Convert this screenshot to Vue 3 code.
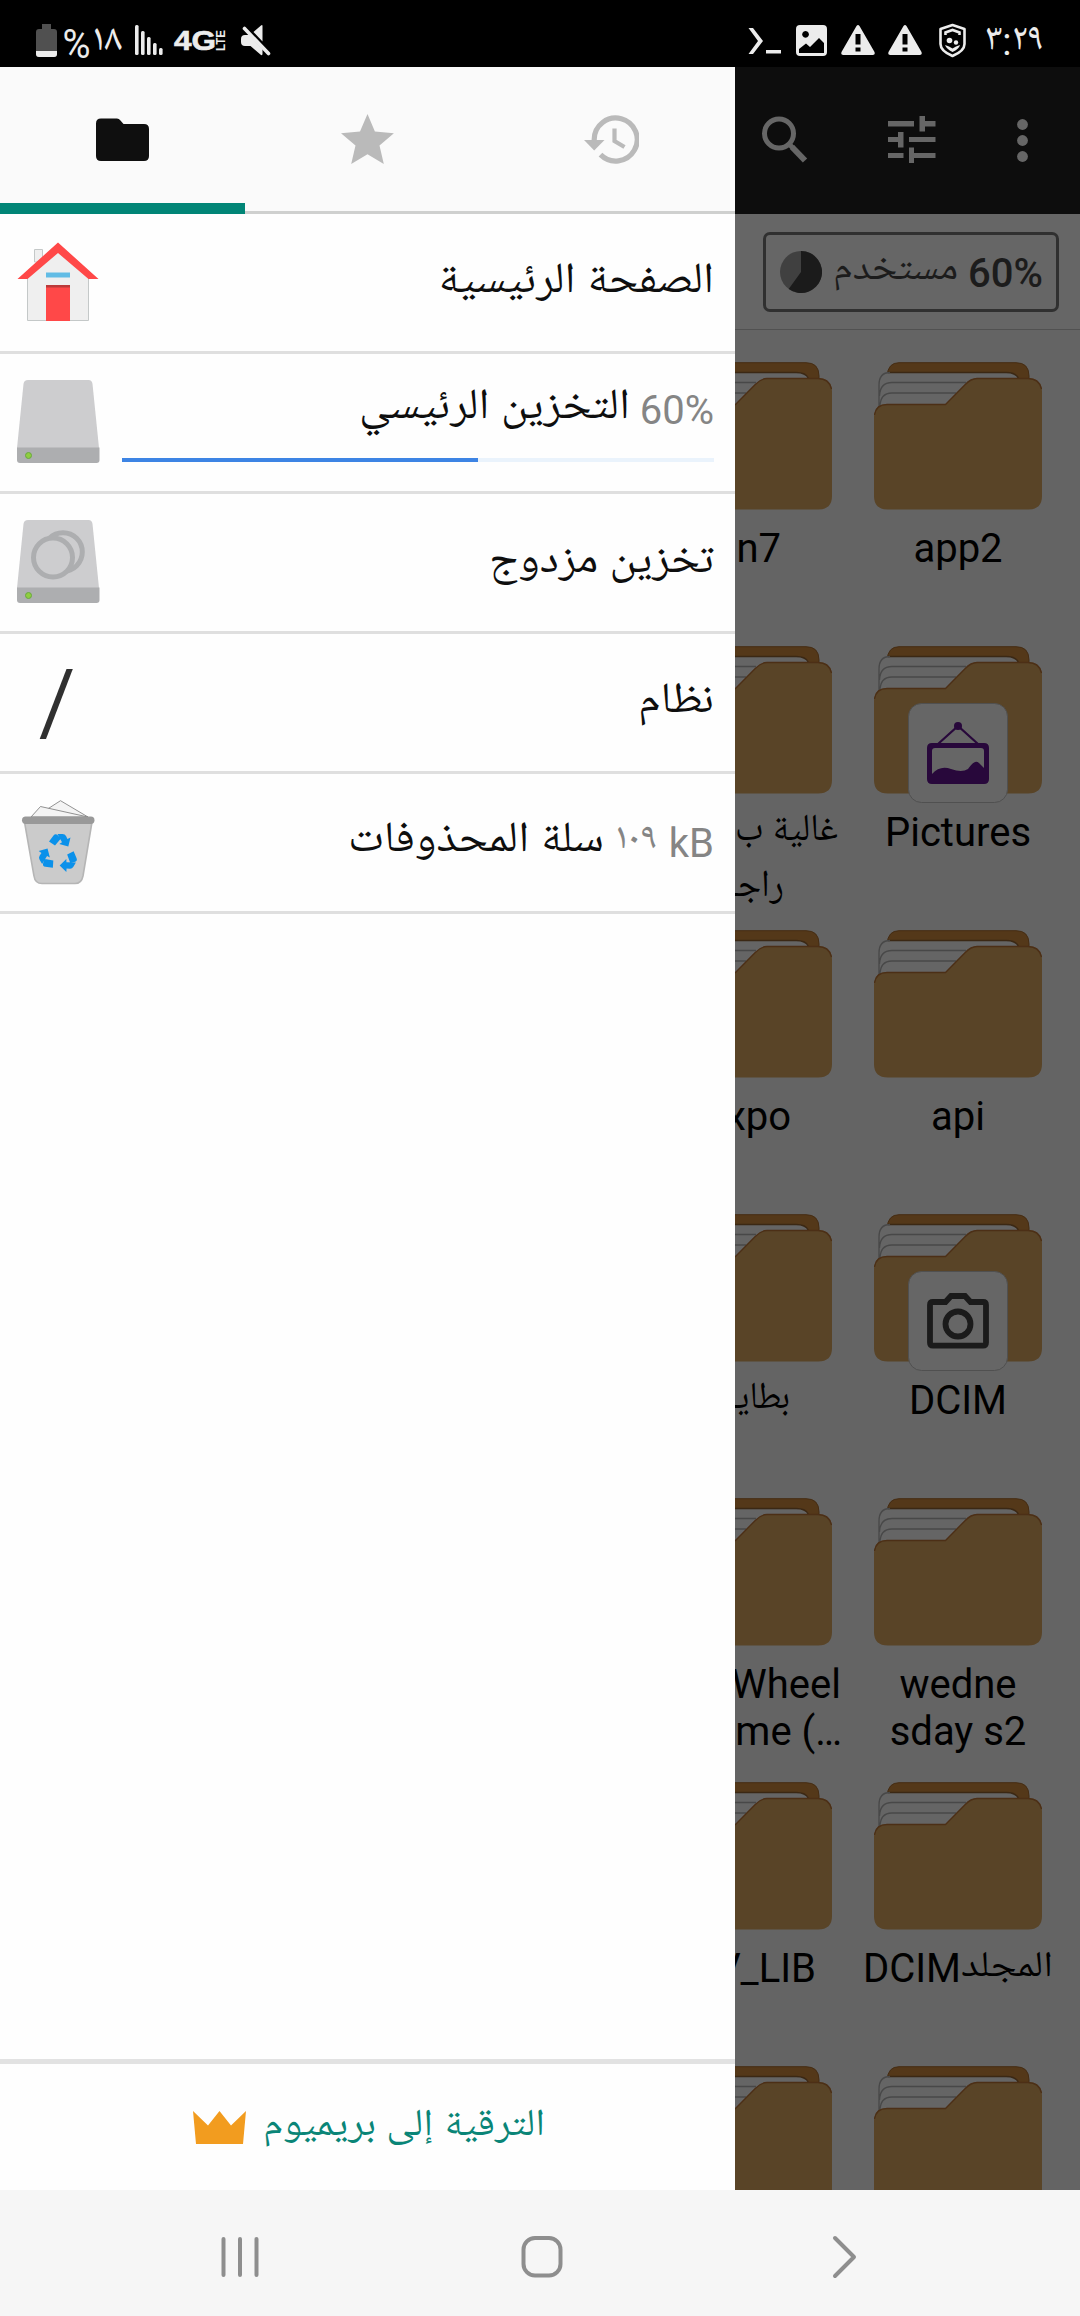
<script setup>
import { h } from 'vue'

// Single line of text fitted to a fixed advance width.
const Fit = (props) =>
  h('svg', { class: 'fit', width: props.w, height: 50 }, [
    h(
      'text',
      {
        x: props.ltr ? 0 : props.w,
        y: props.y || 38,
        direction: props.ltr ? 'ltr' : 'rtl',
        'font-size': props.size || 43,
        textLength: props.w,
        lengthAdjust: 'spacingAndGlyphs',
        fill: 'currentColor',
      },
      props.t
    ),
  ])
Fit.props = ['t', 'w', 'size', 'y', 'ltr']

const bars = [25, 31, 37, 43, 48]

const files = [
  { left: [{ t: 'in7', r: 72 }], right: [{ t: 'app2' }] },
  { left: [{ t: 'غالية ب', w: 103, r: 15, ar: true }, { t: 'راجـ', w: 54, r: 69, ar: true }], right: [{ t: 'Pictures' }], badge: 'frame' },
  { left: [{ t: 'expo', r: 62 }], right: [{ t: 'api' }] },
  { left: [{ t: 'بطايـ', w: 60, r: 63, ar: true }], right: [{ t: 'DCIM' }], badge: 'camera' },
  { left: [{ t: 'Wheel', r: 12 }, { t: 'me (…', r: 11 }], right: [{ t: 'wedne' }, { t: 'sday s2' }] },
  { left: [{ t: 'V_LIB', r: 37 }], right: [{ t: 'DCIM', mixed: 'المجلد' }] },
  { left: [], right: [] },
]
</script>

<template>
  <div class="screen">
    <header class="status">
      <svg width="290" height="67" fill="#ececec">
        <path d="M42 24h9v5h3q3 0 3 3v22q0 3-3 3H39q-3 0-3-3V32q0-3 3-3h3z" fill="#505050" />
        <path d="M36 51h21v3q0 3-3 3H39q-3 0-3-3z" />
        <text x="62.500" y="57.500" font-size="41" textLength="28" lengthAdjust="spacingAndGlyphs">%</text>
        <text x="92" y="55" font-size="38" textLength="30" lengthAdjust="spacingAndGlyphs">١٨</text>
        <rect v-for="(top, i) in bars" :key="top" :x="135 + i * 6" :y="top" width="3.6" :height="55 - top" rx="1.5" />
        <text class="net" x="174" y="50" font-size="28" textLength="42" lengthAdjust="spacingAndGlyphs">4G</text>
        <text class="net lte" transform="translate(225 51) rotate(-90)" font-size="12" textLength="21" lengthAdjust="spacingAndGlyphs">LTE</text>
        <path d="M245 35H249L262.500 49V54q0 1.500-1.500 1L250.500 46H245q-4 0-4-4V39q0-4 4-4zM253.500 32L261 25.500q1.500-1 1.500.5V41.500z" />
        <path d="M244.500 28.500L268.500 53.500" stroke="#ececec" stroke-width="3.600" stroke-linecap="round" />
      </svg>
      <svg width="340" height="67" fill="#ececec">
        <g transform="translate(-740 0)">
          <path d="M748.500 28h4.500l10 13-10 13h-4.500l9.500-13zM766 50h15v3.500h-15z" />
          <path d="M800 25h23q4 0 4 4v23q0 4-4 4h-23q-4 0-4-4V29q0-4 4-4zm5.500 6a3.400 3.400 0 1 0 .1 0zM799 49v4h25V43l-5-5-9 9-4-3.500z" fill-rule="evenodd" />
          <g v-for="x in [858, 905]" :key="x" :transform="`translate(${x} 0)`">
            <path d="M-1.500 26q1.500-2 3 0L16.500 52q1 3-2 3h-29q-3 0-2-3zM-2.500 34v10.500h5V34zM-2.500 47.500v4h5v-4z" fill-rule="evenodd" />
          </g>
          <path d="M952.500 25l12 4v15q0 7-12 12q-12-5-12-12V29z" fill="none" stroke="#ececec" stroke-width="2.600" stroke-linejoin="round" />
          <path d="M945.500 35v-2.500l7-2.500 7 2.500V35" fill="none" stroke="#ececec" stroke-width="2.600" />
          <circle cx="949.500" cy="40.500" r="2.800" />
          <circle cx="956" cy="42.500" r="2.200" />
          <path d="M945 45l4 1.500 3.500 2 3.500-2 4-1.500q-1 4-7.500 7-6-3-7.500-7z" />
          <text x="984" y="55" font-size="38" textLength="60" lengthAdjust="spacingAndGlyphs" direction="ltr">٣:٢٩</text>
        </g>
      </svg>
    </header>

    <main class="body">
      <aside class="drawer">
        <nav class="tabs">
          <div class="tab on">
            <svg width="54" height="44" viewBox="0 0 54 44"><path d="M5 .5H21q2 0 3 1.500l3.500 4H48q5 0 5 5V38q0 5-5 5H5q-5 0-5-5V5.500Q0 .5 5 .5z" fill="#0f0f0f" /></svg>
          </div>
          <div class="tab">
            <svg width="53" height="50" viewBox="0 0 53 50"><path d="M26.500 0l7.400 17.600 19 1.600L38.500 31.500 42.800 50 26.500 40.200 10.200 50l4.300-18.500L0 19.200l19-1.600z" fill="#bababa" /></svg>
          </div>
          <div class="tab recent">
            <svg width="55" height="49" viewBox="0 0 55 49" fill="none" stroke="#bababa">
              <path d="M10.200 25V24.500A21.500 21.500 0 1 1 16.500 39.700" stroke-width="5.200" />
              <path d="M0 25h20.500L10.200 35.500z" fill="#bababa" stroke="none" />
              <path d="M30.500 13.500V26l10 6" stroke-width="4.200" />
            </svg>
          </div>
        </nav>

        <ul class="list">
          <li class="row">
            <svg class="ic" viewBox="0 214 110 137">
              <path d="M34.500 249.500h8V262h-8z" fill="#efefef" stroke="#c4c8c8" />
              <path d="M27.500 278V320.500h61V278L58 248z" fill="#efefef" stroke="#c4c8c8" />
              <path d="M58 242.500L98.500 279H88.500L58 253 27.500 279H17.500z" fill="#ff4848" />
              <path d="M46 272.500h24v5H46z" fill="#62bce5" />
              <path d="M46 285h24v36H46z" fill="#ff4848" />
              <path d="M46 285h24v2.500H46z" fill="#bb3a3a" />
            </svg>
            <Fit t="الصفحة الرئيسية" :w="276" class="name-text" />
          </li>
          <li class="row">
            <svg class="ic" viewBox="0 354 110 137">
              <path d="M28 380H88.500q3.500 0 4 4L99 448H17l6.500-64q.5-4 4.500-4z" fill="#cdcdcf" />
              <path d="M17 447.500H99.500V460q0 3-3 3H20q-3 0-3-3z" fill="#adaeb0" />
              <circle cx="28.500" cy="455.500" r="3" fill="#8fce3f" stroke="#68a840" />
            </svg>
            <div class="storage">
              <div class="line">
                <span class="pct">60%</span>
                <Fit t="التخزين الرئيسي" :w="271" class="lower" />
              </div>
              <div class="track"><div class="fill"></div></div>
            </div>
          </li>
          <li class="row">
            <svg class="ic" viewBox="0 494 110 137">
              <path d="M28 520H88.500q3.500 0 4 4L99 588H17l6.500-64q.5-4 4.500-4z" fill="#cdcdcf" />
              <path d="M17 587.500H99.500V600q0 3-3 3H20q-3 0-3-3z" fill="#adaeb0" />
              <circle cx="28.500" cy="595.500" r="3" fill="#8fce3f" stroke="#68a840" />
              <circle cx="63" cy="552" r="19.300" fill="none" stroke="#adaeb0" stroke-width="5" />
              <circle cx="53" cy="557.500" r="19.500" fill="#cdcdcf" stroke="#adaeb0" stroke-width="5" />
            </svg>
            <Fit t="تخزين مزدوج" :w="225" class="name-text" />
          </li>
          <li class="row">
            <svg class="ic" viewBox="0 634 110 137"><path d="M66.500 669h6.300L46 739h-6.300z" fill="#303030" /></svg>
            <Fit t="نظام" :w="76" class="name-text" />
          </li>
          <li class="row">
            <svg class="ic" viewBox="0 774 110 137">
              <path d="M46 810L60.500 800.700 88 817H40z" fill="#f4f4f4" stroke="#777" stroke-width=".8" />
              <path d="M31 817l9.500-10.500L88 817z" fill="#f4f4f4" stroke="#777" stroke-width=".8" />
              <path d="M24.500 822H92L83 876q-1.500 7.500-8 7.500H42q-7 0-8-7.500z" fill="#cbcbcb" stroke="#b5b5b5" stroke-width="1.600" />
              <rect x="22" y="816.500" width="72.500" height="7.500" rx="3.700" fill="#999" />
              <g v-for="a in [0, 120, 240]" :key="a" :transform="`rotate(${a} 58.500 853.500)`" fill="#0b91ea">
                <path d="M49 841.500l4.500-6q2-2.500 4.500 0L60.500 839l-5.500 6.500zM57.500 834h5q2.500 0 3.500 2l1.500 3 3-1.500-2.200 9-9-2.500 2.700-1.700z" />
              </g>
            </svg>
            <div class="line trash">
              <span class="pct">kB</span>
              <Fit t="١٠٩" :w="43" :size="37" :y="39" ltr="1" class="grey" />
              <Fit t="سلة المحذوفات" :w="256" class="lower" />
            </div>
          </li>
        </ul>

        <footer class="premium">
          <svg width="53" height="33" viewBox="0 0 53 33"><path d="M0 0l15 14.500L26.500 0 38 14.500 53 0 50 33H3z" fill="#f29c1f" /></svg>
          <Fit t="الترقية إلى بريميوم" :w="282" :size="38" />
        </footer>
      </aside>

      <section class="files">
        <div class="appbar">
          <svg width="345" height="147" viewBox="735 67 345 147" fill="#666">
            <circle cx="779" cy="133.500" r="14.500" fill="none" stroke="#666" stroke-width="5" />
            <path d="M790 145l3 3" stroke="#666" stroke-width="5" />
            <path d="M792 147l13 13.500" stroke="#666" stroke-width="6" />
            <path d="M888 121h26v5.500h-26zM919.500 116h5.500v5h10.500v5.500H925v5h-5.500zM888 137h10v-5h5.500v15.500H898v-5.500h-10zM909 137h26.500v5H909zM888 153h15.500v5H888zM909 147.500h5v5.500h21.500v5H914v5h-5z" />
            <circle v-for="y in [124.5, 140.5, 156.5]" :key="y" cx="1022.500" :cy="y" r="5.400" />
          </svg>
        </div>
        <div class="usage">
          <div class="chip">
            <svg width="42" height="42" viewBox="-21 -21 42 42">
              <circle r="21" fill="#404040" />
              <path d="M0 0V-21A21 21 0 1 1-12.300 17z" fill="#1b1b1b" />
            </svg>
            <Fit t="مستخدم" :w="125" :size="38" />
            <b>60%</b>
          </div>
        </div>
        <div class="grid">
          <template v-for="(f, i) in files" :key="i">
            <div v-for="side in ['left', 'right']" :key="side" class="cell">
              <div class="icon">
                <svg width="168" height="148" viewBox="0 0 168 148">
                  <path d="M13 14Q14 .7 25 .7H142Q155 .7 155 14V30H13z" fill="#543819" stroke="#452c13" />
                  <path d="M5 45V23Q5 10.500 18 10.500H132Q145 10.500 145 20V45z" fill="#656565" />
                  <path d="M14 10.500H132Q142 10.500 144.500 16.500" fill="none" stroke="#3b2814" stroke-width="1.500" />
                  <path d="M5 45V23Q5 10.500 16 10.500M5.500 34Q6 20.500 18 20.500H92M6 45Q6 31 18 31H82" fill="none" stroke="#484848" stroke-width="1.300" />
                  <path d="M0 55Q0 42.300 13 42.300H71.500L91 22.500Q97 16.300 103 16.300H154Q168 16.300 168 30V134Q168 147.500 154 147.500H14Q0 147.500 0 134z" fill="#594427" />
                  <path d="M.5 53Q2 42.500 13 42.500H71.500L91 22.700Q97 16.500 103 16.500H154Q165 16.500 167.500 27" fill="none" stroke="#4c2f16" stroke-width="1.300" />
                </svg>
                <svg v-if="side === 'right' && f.badge" class="badge" width="100" height="100" viewBox="0 0 100 100">
                  <rect x=".5" y=".5" width="99" height="99" rx="13" fill="#666" stroke="#505050" />
                  <g v-if="f.badge === 'frame'" fill="#28083b">
                    <circle cx="50" cy="23" r="4" />
                    <path d="M30 41L50 23 70 41" fill="none" stroke="#28083b" stroke-width="2.200" />
                    <path d="M24 40H76q5 0 5 5V76q0 5-5 5H24q-5 0-5-5V45q0-5 5-5zM27 45q-3 0-3 3V71Q32 62 43 66T60 66C63 62 67 56 71 60L76 65V48q0-3-3-3z" fill-rule="evenodd" />
                  </g>
                  <g v-else fill="none" stroke="#1b1b1b" stroke-width="5.800">
                    <path d="M25 31H37.500L43 25H57L62.500 31H75Q78 31 78 34V71.500Q78 74.700 75 74.700H25Q22 74.700 22 71.500V34Q22 31 25 31z" />
                    <circle cx="50" cy="53" r="12.500" />
                  </g>
                </svg>
              </div>
              <div class="labels" :class="side">
                <div v-for="l in f[side]" :key="l.t" class="label" :style="l.r ? { paddingRight: l.r + 'px' } : null">
                  <Fit v-if="l.ar" :t="l.t" :w="l.w" :size="38" class="name" />
                  <template v-else>{{ l.t }}</template>
                  <Fit v-if="l.mixed" :t="l.mixed" :w="92" :size="36" class="name" />
                </div>
              </div>
            </div>
          </template>
        </div>
      </section>
    </main>

    <footer class="keys">
      <svg width="302" height="126" viewBox="89 2190 302 126"><path d="M223.500 2239v36M240 2239v36M256.500 2239v36" /></svg>
      <svg width="302" height="126" viewBox="391 2190 302 126"><rect x="523.500" y="2238" width="37" height="37.500" rx="11.500" /></svg>
      <svg width="302" height="126" viewBox="693 2190 302 126"><path d="M835 2238l19 19-19 19" stroke-linejoin="round" /></svg>
    </footer>
  </div>
</template>

<style>
body { margin: 0; background: #000; }
</style>

<style scoped>
.screen {
  width: 1080px;
  height: 2316px;
  overflow: hidden;
  display: flex;
  flex-direction: column;
  font-family: Roboto, "Noto Naskh Arabic UI", "Noto Naskh Arabic", "Noto Sans Arabic", "DejaVu Sans", sans-serif;
  font-size: 40px;
}
svg { display: block; flex: none; }
.fit { overflow: visible; display: block; flex: none; }
.status { height: 67px; background: #000; display: flex; justify-content: space-between; }
.net { font-family: "Liberation Sans", sans-serif; font-weight: bold; stroke: #ececec; stroke-width: 0.6; }
.net.lte { stroke: none; }
.body { flex: 1; display: flex; min-height: 0; }
.drawer { width: 735px; background: #fefefe; display: flex; flex-direction: column; color: #0e0e0e; }
.tabs { height: 147px; background: #fafafa; display: flex; flex: none; }
.tab { width: 245px; box-sizing: border-box; display: flex; align-items: center; justify-content: center; border-bottom: 3px solid #cfd0cf; }
.tab.on { border-bottom: 11px solid #018576; padding-top: 10px; }
.tab.recent { padding-right: 2px; }
.list { list-style: none; margin: 0; padding: 0; flex: 1; }
.row { height: 137px; border-bottom: 3px solid #dfdfdf; display: flex; justify-content: space-between; align-items: flex-start; padding-right: 21px; }
.ic { width: 110px; height: 137px; }
.name-text { margin-top: 46px; }
.storage { width: 592px; padding-top: 27px; margin-right: 1px; }
.line { display: flex; flex-direction: row-reverse; gap: 11px; align-items: flex-start; }
.pct { color: #858585; line-height: 47px; margin-top: 6px; }
.storage .pct { margin-right: -1px; }
.lower { margin-top: 5px; }
.storage .line .lower { margin-right: -1px; }
.track { height: 4px; background: #eaf3fc; margin: 21px -1px 0 1px; }
.storage .line { height: 56px; }
.fill { width: 60.2%; height: 4px; background: #3d84e4; }
.trash { padding-top: 40px; gap: 11px; }
.trash .pct { margin-top: 6px; }
.grey { color: #858585; }
.premium { height: 126px; border-top: 5px solid #e2e2e2; display: flex; align-items: center; justify-content: center; gap: 17px; padding-left: 2px; color: #0a8577; }
.files { flex: 1; min-width: 0; background: #646464; display: flex; flex-direction: column; overflow: hidden; }
.appbar { height: 147px; background: #0d0d0d; flex: none; }
.usage { height: 115px; flex: none; background: #666; border-bottom: 1px solid #515151; }
.chip { width: 296px; height: 80px; box-sizing: border-box; margin: 18px 0 0 28px; border: 3px solid #303030; border-radius: 7px; display: flex; align-items: center; padding-left: 14px; color: #1c1c1c; }
.chip .fit { margin: -2px 10px 0 11px; }
.chip b { font-weight: 500; padding-top: 2px; }
.grid { display: grid; grid-template-columns: 210px 210px; grid-auto-rows: 284px; margin: 32px 0 0 -92px; color: #000; }
.icon { position: relative; margin-left: 21px; height: 148px; }
.badge { position: absolute; left: 34px; top: 57px; }
.labels { padding-top: 15px; line-height: 47px; }
.label { display: flex; justify-content: center; white-space: pre; height: 47px; }
.left .label { justify-content: flex-end; }
.name { margin-top: -2px; }
.label + .label .name { margin-top: 7px; }
.keys { height: 126px; background: #f6f6f6; display: flex; padding-left: 89px; fill: none; stroke: #8e8e8e; stroke-width: 4; stroke-linecap: round; }
</style>
